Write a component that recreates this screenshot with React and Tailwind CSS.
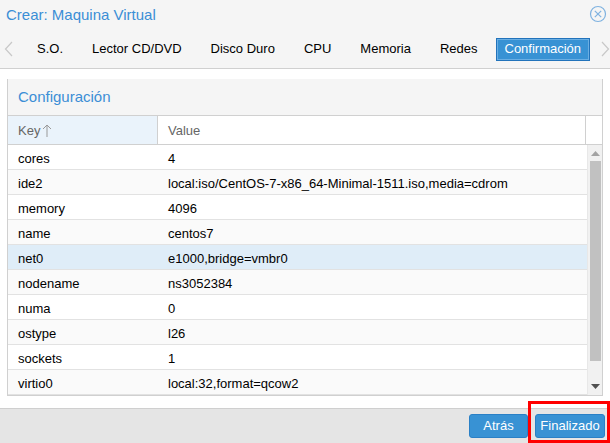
import React from "react";

const rows = [
  ["cores", "4"],
  ["ide2", "local:iso/CentOS-7-x86_64-Minimal-1511.iso,media=cdrom"],
  ["memory", "4096"],
  ["name", "centos7"],
  ["net0", "e1000,bridge=vmbr0"],
  ["nodename", "ns3052384"],
  ["numa", "0"],
  ["ostype", "l26"],
  ["sockets", "1"],
  ["virtio0", "local:32,format=qcow2"],
];

const tabs = ["S.O.", "Lector CD/DVD", "Disco Duro", "CPU", "Memoria", "Redes"];

export default function App() {
  return (
    <div
      className="w-[610px] h-[443px] flex flex-col bg-white overflow-hidden relative"
      style={{ fontFamily: '"Liberation Sans", Arial, sans-serif' }}
    >
      {/* Header */}
      <div className="bg-[#f5f5f5] flex flex-col border-b border-[#d0d0d0]">
        <div className="h-[29px] flex items-center justify-between pl-[6px] pr-[4px]">
          <span className="text-[15px] text-[#3b8ed6] leading-none mt-[-1px]">Crear: Maquina Virtual</span>
          <svg width="18" height="18" viewBox="0 0 18 18" className="mt-[-1px] mr-[-1px]">
            <circle cx="9" cy="9" r="7.5" fill="none" stroke="#7fb2e0" strokeWidth="1.2" />
            <path d="M5.8 5.8 L12.2 12.2 M12.2 5.8 L5.8 12.2" stroke="#7fb2e0" strokeWidth="1.2" />
          </svg>
        </div>
        <div className="h-[39px] flex items-center pt-[1px] overflow-hidden">
          <div className="w-[26px] shrink-0 h-full flex items-center pl-[4px]">
            <svg width="9" height="16" viewBox="0 0 9 16">
              <path d="M8 1 L1.5 8 L8 15" fill="none" stroke="#c8c8c8" strokeWidth="1.2" />
            </svg>
          </div>
          <div className="flex items-center gap-[7px] shrink-0">
            {tabs.map((t) => (
              <div key={t} className="h-[23px] px-[10px] shrink-0 whitespace-nowrap border border-transparent flex items-center text-[13px] text-black">
                {t}
              </div>
            ))}
            <div className="h-[23px] px-[8px] shrink-0 whitespace-nowrap border border-[#2273bb] bg-[#3892d4] flex items-center text-[13px] text-white shadow-[inset_0_0_0_1px_#6aaee3]">
              Confirmación
            </div>
          </div>
          <div className="ml-[11px] shrink-0 flex items-center">
            <svg width="9" height="16" viewBox="0 0 9 16">
              <path d="M1 1 L7.5 8 L1 15" fill="none" stroke="#c8c8c8" strokeWidth="1.2" />
            </svg>
          </div>
        </div>
      </div>

      {/* Body */}
      <div className="flex-1 flex flex-col pt-[10px] px-[7px] pb-[10px]">
        <div className="w-[596px] border border-[#d0d0d0] border-t-0 flex flex-col">
          <div className="h-[36px] bg-[#f5f5f5] flex items-center pl-[10px]">
            <span className="text-[15px] text-[#3b8ed6]">Configuración</span>
          </div>
          <div className="h-[30px] flex border-t border-b border-[#d0d0d0] text-[13px] text-[#666]">
            <div className="w-[150px] bg-[#eaf3fb] border-r border-[#d0d0d0] flex items-center pl-[10px] pt-[1px] gap-[2px]">
              Key
              <svg width="10" height="14" viewBox="0 0 10 14">
                <path d="M5 1 L5 13 M1 5 L5 1 L9 5" fill="none" stroke="#999" strokeWidth="1" />
              </svg>
            </div>
            <div className="w-[428px] border-r border-[#d0d0d0] flex items-center pl-[10px] pt-[1px]">Value</div>
            <div className="flex-1" />
          </div>
          <div className="flex">
            <div className="w-[579px] flex flex-col text-[13px] text-black">
              {rows.map(([k, v], i) => (
                <div
                  key={k}
                  className={
                    "h-[25px] flex items-center pt-[3px] border-b border-[#e2e2e2] " +
                    (k === "net0" ? "bg-[#dfedf8]" : i % 2 === 1 ? "bg-[#fafafa]" : "bg-white")
                  }
                >
                  <div className="w-[150px] pl-[10px]">{k}</div>
                  <div className="pl-[10px] whitespace-nowrap">{v}</div>
                </div>
              ))}
            </div>
            <div className="flex-1 bg-[#f1f1f1] flex flex-col items-center border-l border-[#e8e8e8]">
              <div className="h-[16px] flex items-center justify-center">
                <svg width="9" height="5" viewBox="0 0 9 5"><path d="M0 5 L4.5 0 L9 5 Z" fill="#a3a3a3" /></svg>
              </div>
              <div className="w-[11px] h-[200px] bg-[#c1c1c1]" />
              <div className="flex-1" />
              <div className="h-[18px] flex items-center justify-center">
                <svg width="9" height="5" viewBox="0 0 9 5"><path d="M0 0 L9 0 L4.5 5 Z" fill="#505050" /></svg>
              </div>
            </div>
          </div>
        </div>
      </div>

      {/* Footer */}
      <div className="h-[35px] bg-[#e5e5e5] border-t border-[#cfcfcf] flex items-center justify-end gap-[7px] pr-[5px]">
        <div className="h-[24px] w-[59px] rounded-[3px] bg-[#3892d4] border border-[#2a80c6] text-white text-[13px] flex items-center justify-center">
          Atrás
        </div>
        <div className="h-[24px] w-[70px] rounded-[3px] bg-[#3892d4] border border-[#2a80c6] text-white text-[13px] flex items-center justify-center">
          Finalizado
        </div>
      </div>

      {/* Red highlight box */}
      <div className="absolute left-[528px] top-[401px] w-[82px] h-[42px] border-[3px] border-[#ff0000] pointer-events-none" />
    </div>
  );
}
